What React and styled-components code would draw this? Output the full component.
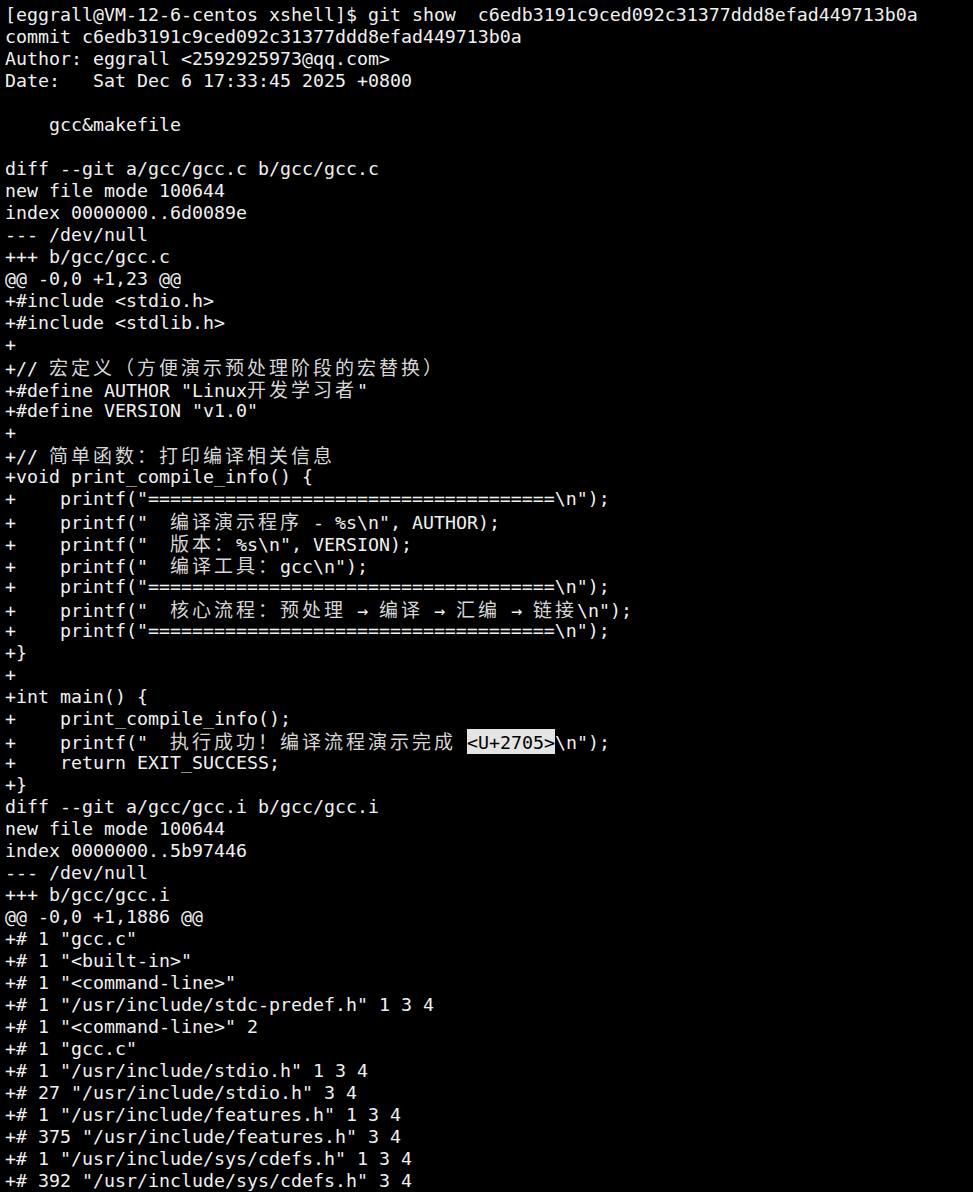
import React from 'react';
import styled, { createGlobalStyle } from 'styled-components';

const GlobalStyle = createGlobalStyle`
  html, body {
    margin: 0;
    padding: 0;
    background: #000;
  }
`;

const Terminal = styled.div`
  background: #000;
  color: #f0f0f0;
  min-height: 1192px;
  padding: 4px 0 0 5px;
  box-sizing: border-box;
  font-family: "DejaVu Sans Mono", "Liberation Mono", monospace;
  font-size: 18.27px;
  overflow: hidden;
`;

const Line = styled.div`
  height: 22px;
  line-height: 22px;
  white-space: pre;
`;

const Wide = styled.span`
  font-family: "Noto Sans CJK SC", "DejaVu Sans Mono", sans-serif;
  font-size: 19px;
  font-weight: 400;
  letter-spacing: 3px;
  color: #d6d6d6;
`;

const Mark = styled.span`
  background: #e4e4e4;
  color: #000;
  padding: 3px 0 1px;
`;

const EQ = '='.repeat(37);

const LINES = [
  '[eggrall@VM-12-6-centos xshell]$ git show  c6edb3191c9ced092c31377ddd8efad449713b0a',
  'commit c6edb3191c9ced092c31377ddd8efad449713b0a',
  'Author: eggrall <2592925973@qq.com>',
  'Date:   Sat Dec 6 17:33:45 2025 +0800',
  '',
  '    gcc&makefile',
  '',
  'diff --git a/gcc/gcc.c b/gcc/gcc.c',
  'new file mode 100644',
  'index 0000000..6d0089e',
  '--- /dev/null',
  '+++ b/gcc/gcc.c',
  '@@ -0,0 +1,23 @@',
  '+#include <stdio.h>',
  '+#include <stdlib.h>',
  '+',
  '+// 宏定义（方便演示预处理阶段的宏替换）',
  '+#define AUTHOR "Linux开发学习者"',
  '+#define VERSION "v1.0"',
  '+',
  '+// 简单函数：打印编译相关信息',
  '+void print_compile_info() {',
  `+    printf("${EQ}\\n");`,
  '+    printf("  编译演示程序 - %s\\n", AUTHOR);',
  '+    printf("  版本：%s\\n", VERSION);',
  '+    printf("  编译工具：gcc\\n");',
  `+    printf("${EQ}\\n");`,
  '+    printf("  核心流程：预处理 → 编译 → 汇编 → 链接\\n");',
  `+    printf("${EQ}\\n");`,
  '+}',
  '+',
  '+int main() {',
  '+    print_compile_info();',
  '+    printf("  执行成功！编译流程演示完成 <U+2705>\\n");',
  '+    return EXIT_SUCCESS;',
  '+}',
  'diff --git a/gcc/gcc.i b/gcc/gcc.i',
  'new file mode 100644',
  'index 0000000..5b97446',
  '--- /dev/null',
  '+++ b/gcc/gcc.i',
  '@@ -0,0 +1,1886 @@',
  '+# 1 "gcc.c"',
  '+# 1 "<built-in>"',
  '+# 1 "<command-line>"',
  '+# 1 "/usr/include/stdc-predef.h" 1 3 4',
  '+# 1 "<command-line>" 2',
  '+# 1 "gcc.c"',
  '+# 1 "/usr/include/stdio.h" 1 3 4',
  '+# 27 "/usr/include/stdio.h" 3 4',
  '+# 1 "/usr/include/features.h" 1 3 4',
  '+# 375 "/usr/include/features.h" 3 4',
  '+# 1 "/usr/include/sys/cdefs.h" 1 3 4',
  '+# 392 "/usr/include/sys/cdefs.h" 3 4',
];

const SPLIT = /([\u3000-\u9fff\uff00-\uffef]+|<U\+2705>)/;

const renderLine = (text) =>
  text.split(SPLIT).map((part, i) => {
    if (!part) return null;
    if (part === '<U+2705>') return <Mark key={i}>{part}</Mark>;
    if (/^[\u3000-\u9fff\uff00-\uffef]/.test(part)) return <Wide key={i}>{part}</Wide>;
    return part;
  });

const App = () => (
  <>
    <GlobalStyle />
    <Terminal>
      {LINES.map((text, i) => (
        <Line key={i}>{text ? renderLine(text) : ' '}</Line>
      ))}
    </Terminal>
  </>
);

export default App;
